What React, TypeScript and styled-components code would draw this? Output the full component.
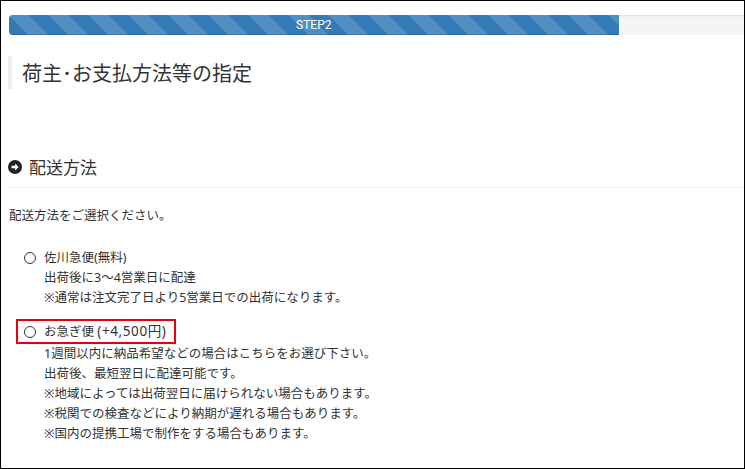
import React from "react";
import styled, { createGlobalStyle } from "styled-components";

const GlobalStyle = createGlobalStyle`
  html, body { margin: 0; padding: 0; background: #fff; }
  body { font-family: "Noto Sans", "Noto Sans CJK JP", sans-serif; color: #333; }
  * { box-sizing: border-box; }
`;

const Frame = styled.div`
  width: 745px;
  height: 469px;
  border: 1px solid #000;
  overflow: hidden;
  background: #fff;
`;

const Content = styled.div`
  width: 770px;
  padding-left: 7px;
`;

const Track = styled.div`
  margin: 14px 0 0 1px;
  height: 20px;
  width: 762px;
  background: #f5f5f5;
  border-radius: 4px;
  overflow: hidden;
  box-shadow: inset 0 1px 2px rgba(0, 0, 0, 0.1);
`;

const Fill = styled.div`
  height: 100%;
  background-color: #337ab7;
  background-image: linear-gradient(
    45deg,
    rgba(255, 255, 255, 0.15) 25%,
    transparent 25%,
    transparent 50%,
    rgba(255, 255, 255, 0.15) 50%,
    rgba(255, 255, 255, 0.15) 75%,
    transparent 75%,
    transparent
  );
  background-size: 40px 40px;
  box-shadow: inset 0 -1px 0 rgba(0, 0, 0, 0.15);
  color: #fff;
  font-family: "Roboto", "Liberation Sans", sans-serif;
  font-size: 12px;
  line-height: 20px;
  text-align: center;
`;

const PageTitle = styled.h1`
  margin: 21px 0 0 0;
  height: 33px;
  border-left: 4px solid #eeeeee;
  padding-left: 10px;
  font-family: "Noto Sans CJK JP", sans-serif;
  font-size: 20px;
  font-weight: normal;
  line-height: 33px;
  color: #333;
`;

const SectionHeading = styled.h2`
  margin: 66px 0 0 0;
  display: flex;
  align-items: center;
  gap: 7px;
  height: 33px;
  padding-bottom: 8px;
  border-bottom: 1px solid #eeeeee;
  font-family: "Noto Sans CJK JP", sans-serif;
  font-size: 17px;
  font-weight: normal;
  line-height: 24px;
  color: #333;
`;

const Intro = styled.p`
  margin: 18px 0 0 1px;
  font-size: 12.5px;
  line-height: 20px;
`;

const Option = styled.div<{ $gap: number }>`
  margin: ${(p) => p.$gap}px 0 0 8px;
`;

const Label = styled.label<{ $highlight?: boolean }>`
  display: flex;
  align-items: center;
  gap: 8px;
  font-size: 12.5px;
  line-height: 20px;
  border: ${(p) => (p.$highlight ? "2px solid #e60012" : "none")};
  padding: ${(p) => (p.$highlight ? "0 6px 0 6px" : "0 0 0 8px")};
  width: ${(p) => (p.$highlight ? "160px" : "fit-content")};
  white-space: nowrap;
`;

const Price = styled.span`
  font-size: 13.5px;
  letter-spacing: 0.6px;
`;

const Radio = styled.input.attrs({ type: "radio" })`
  appearance: none;
  margin: 0;
  width: 12px;
  height: 12px;
  border: 1px solid #333;
  border-radius: 50%;
  background: #fff;
  flex: none;
`;

const Desc = styled.div`
  padding-left: 28px;
  font-size: 12.5px;
  line-height: 20px;
`;

const ArrowIcon = () => (
  <svg width="14" height="14" viewBox="0 0 16 16">
    <circle cx="8" cy="8" r="8" fill="#222" />
    <path d="M4 6.6h4.2V4l4 4-4 4V9.4H4z" fill="#fff" />
  </svg>
);

const options = [
  {
    label: "佐川急便(無料)",
    price: "",
    gap: 22,
    highlight: false,
    lines: ["出荷後に3～4営業日に配達", "※通常は注文完了日より5営業日での出荷になります。"],
  },
  {
    label: "お急ぎ便 ",
    price: "(+4,500円)",
    gap: 11,
    highlight: true,
    lines: [
      "1週間以内に納品希望などの場合はこちらをお選び下さい。",
      "出荷後、最短翌日に配達可能です。",
      "※地域によっては出荷翌日に届けられない場合もあります。",
      "※税関での検査などにより納期が遅れる場合もあります。",
      "※国内の提携工場で制作をする場合もあります。",
    ],
  },
];

export default function App() {
  const progress = 80;
  return (
    <>
      <GlobalStyle />
      <Frame>
        <Content>
          <Track>
            <Fill style={{ width: `${progress}%` }}>STEP2</Fill>
          </Track>
          <PageTitle>荷主･お支払方法等の指定</PageTitle>
          <SectionHeading>
            <ArrowIcon />
            配送方法
          </SectionHeading>
          <Intro>配送方法をご選択ください。</Intro>
          {options.map((o) => (
            <Option key={o.label} $gap={o.gap}>
              <Label $highlight={o.highlight}>
                <Radio name="delivery" />
                <span>
                  {o.label}
                  {o.price && <Price>{o.price}</Price>}
                </span>
              </Label>
              {o.lines.map((l) => (
                <Desc key={l}>{l}</Desc>
              ))}
            </Option>
          ))}
        </Content>
      </Frame>
    </>
  );
}
